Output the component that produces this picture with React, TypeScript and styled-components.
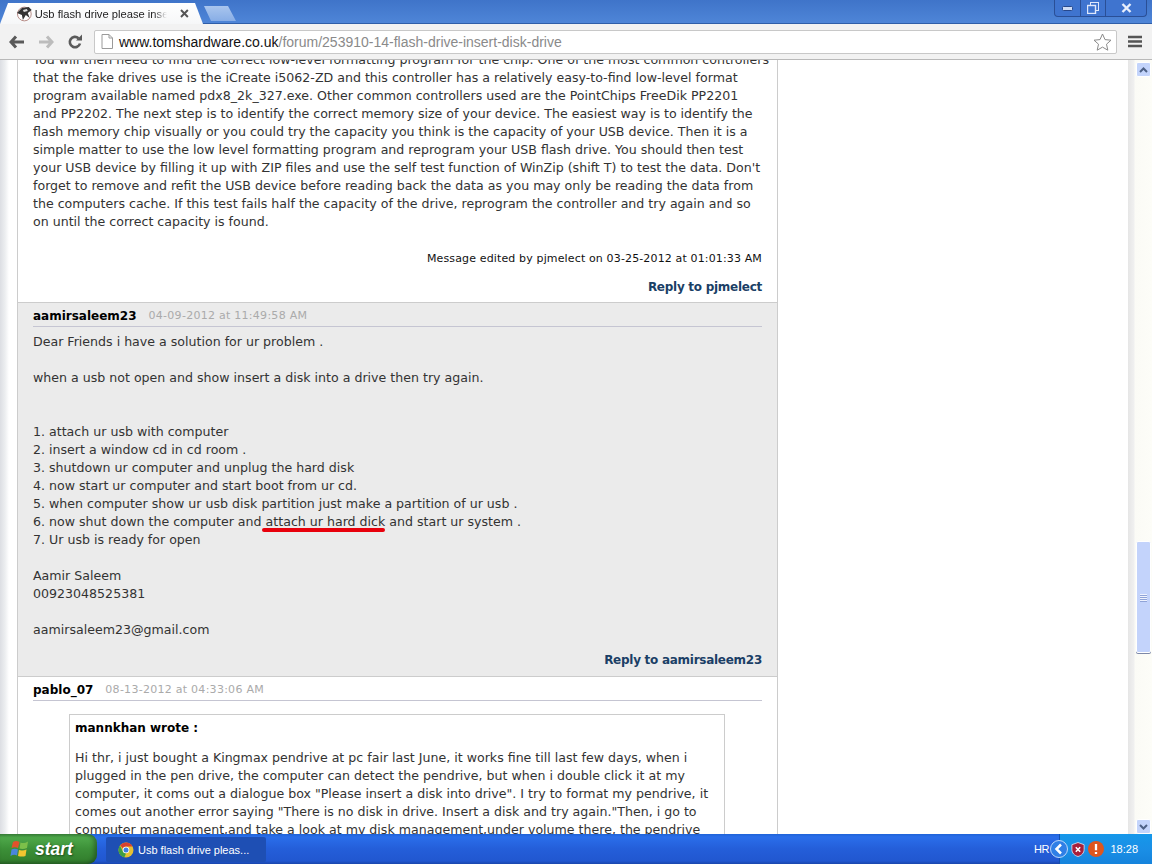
import React from 'react'
import styled, { createGlobalStyle } from 'styled-components'

const GlobalStyle = createGlobalStyle`
  html, body {
    margin: 0;
    padding: 0;
    overflow: hidden;
    background: #fff;
  }
`

const Screen = styled.div`
  width: 1152px;
  height: 864px;
  display: flex;
  flex-direction: column;
  overflow: hidden;
  font-family: 'DejaVu Sans', Verdana, sans-serif;
`

const TabStrip = styled.div`
  height: 24px;
  flex: none;
  display: flex;
  align-items: flex-end;
  justify-content: space-between;
  background: linear-gradient(#3f74c9, #4f86d8);
  box-shadow: inset 0 -1px 0 #2f5ea8;
`

const Tabs = styled.div`
  display: flex;
  align-items: flex-end;
`

const Tab = styled.div`
  width: 203px;
  height: 21px;
  box-sizing: border-box;
  padding: 0 14px 0 16px;
  display: flex;
  align-items: center;
  gap: 2px;
  background: linear-gradient(#fff, #f6f7f8);
  clip-path: polygon(0 100%, 8px 0, 195px 0, 100% 100%);
`

const TabTitle = styled.span`
  width: 135px;
  margin-right: 11px;
  overflow: hidden;
  white-space: nowrap;
  font: 11.2px 'Liberation Sans', Arial, sans-serif;
  color: #222;
  -webkit-mask-image: linear-gradient(90deg, #000 90%, transparent);
  mask-image: linear-gradient(90deg, #000 90%, transparent);
`

const NewTab = styled.div`
  width: 32px;
  height: 15px;
  margin: 0 0 3px 1px;
  background: linear-gradient(#a9c5ee, #88aee6);
  clip-path: polygon(0 0, 24px 0, 100% 100%, 7px 100%);
`

const WindowButtons = styled.div`
  display: flex;
  align-self: flex-start;
  margin-right: 5px;
  height: 16px;
  border: 1px solid #2a4f96;
  border-top: 0;
  border-radius: 0 0 4px 4px;
  background: #3f74cf;
`

const WindowButton = styled.div<{ $w: number }>`
  width: ${(p) => p.$w}px;
  box-sizing: border-box;
  display: flex;
  align-items: center;
  justify-content: center;
  & + & {
    border-left: 1px solid #2a4f96;
  }
`

const Toolbar = styled.div`
  height: 36px;
  flex: none;
  box-sizing: border-box;
  display: flex;
  align-items: center;
  padding: 0 10px 0 9px;
  background: #f2f2f2;
  border-bottom: 1px solid #b9b9b9;
`

const NavButton = styled.div<{ $w: number }>`
  width: ${(p) => p.$w}px;
  display: flex;
  align-items: center;
  justify-content: flex-start;
`

const Omnibox = styled.div`
  flex: 1;
  height: 24px;
  margin-right: 11px;
  box-sizing: border-box;
  display: flex;
  align-items: center;
  padding: 0 4px 0 6px;
  gap: 6px;
  background: #fff;
  border: 1px solid #c8c8c8;
  border-radius: 2px;
`

const Url = styled.div`
  flex: 1;
  font: 14px 'Liberation Sans', Arial, sans-serif;
  color: #8a8a8a;
  white-space: nowrap;
  b {
    font-weight: normal;
    color: #111;
  }
`

const Viewport = styled.div`
  flex: 1;
  min-height: 0;
  display: flex;
  background: #fff;
  overflow: hidden;
`

const Gutter = styled.div`
  width: 17px;
  flex: none;
  background: linear-gradient(90deg, #dcdee3 0, #eceef0 5px, #fff 9px);
`

const Forum = styled.div`
  width: 761px;
  flex: none;
  box-sizing: border-box;
  border-left: 1px solid #ccc;
  border-right: 1px solid #ccc;
  margin-top: -9px;
  font-size: 12.6px;
  line-height: 18px;
  color: #333;
`

const Spacer = styled.div`
  flex: 1;
`

const Post = styled.section<{ $alt?: boolean }>`
  box-sizing: border-box;
  padding: 0 15px 0 15px;
  background: ${(p) => (p.$alt ? '#ebebeb' : '#fff')};
  & + & {
    border-top: 1px solid #ccc;
  }
`

const Line = styled.div`
  height: 18px;
  white-space: nowrap;
`

const Edited = styled.div`
  margin-top: 19px;
  text-align: right;
  font-size: 11px;
  color: #111;
  letter-spacing: 0.14px;
`

const Actions = styled.div<{ $gap: number; $end: number }>`
  margin-top: ${(p) => p.$gap}px;
  padding-bottom: ${(p) => p.$end}px;
  text-align: right;
  font-size: 12px;
  font-weight: bold;
  color: #1b3f66;
  letter-spacing: -0.27px;
`

const PostHead = styled.header`
  height: 24px;
  box-sizing: border-box;
  padding-top: 2px;
  display: flex;
  align-items: center;
  gap: 12px;
  border-bottom: 1px solid #c5c5d2;
  margin-bottom: 6px;
`

const Author = styled.span`
  font-size: 12px;
  font-weight: bold;
  color: #000;
`

const Stamp = styled.span`
  font-size: 11px;
  color: #aaa;
  letter-spacing: 0.27px;
`

const Marked = styled.span`
  position: relative;
  &::after {
    content: '';
    position: absolute;
    left: -4px;
    right: 0;
    bottom: -3px;
    height: 4px;
    border-radius: 2px;
    background: #e8000c;
  }
`

const Quote = styled.blockquote`
  margin: 13px 0 0 36px;
  width: 656px;
  box-sizing: border-box;
  padding: 4px 5px 0;
  border: 1px solid #ccc;
  background: #fff;
`

const QuoteHead = styled.div`
  height: 18px;
  margin-bottom: 12px;
  font-weight: bold;
  font-size: 12px;
  color: #000;
`

const Scrollbar = styled.div`
  width: 24px;
  flex: none;
  display: flex;
  flex-direction: column;
  align-items: flex-end;
  box-sizing: border-box;
  padding-right: 1px;
  background: linear-gradient(90deg, #e6e6e6 0, #f0f0f0 6px, #fbfbf6 7px, #fdfdf8 100%);
`

const ScrollArrow = styled.div`
  width: 15px;
  height: 15px;
  margin-top: 2px;
  display: flex;
  align-items: center;
  justify-content: center;
  border: 1px solid #fff;
  border-radius: 2px;
  box-sizing: border-box;
  background: #c3d4fb;
`

const Track = styled.div`
  flex: 1;
  width: 15px;
  position: relative;
`

const Thumb = styled.div`
  position: absolute;
  top: 464px;
  left: 0;
  width: 15px;
  height: 112px;
  box-sizing: border-box;
  display: flex;
  flex-direction: column;
  align-items: center;
  justify-content: center;
  gap: 1px;
  background: #c3d3fb;
  border: 1px solid #fff;
  border-radius: 2px;
  box-shadow: 0 1px 0 #7d88a8;
  i {
    width: 7px;
    height: 1px;
    background: #eef2fe;
    box-shadow: 0 1px 0 #8fa3d8;
  }
`

const Taskbar = styled.div`
  height: 30px;
  flex: none;
  display: flex;
  align-items: stretch;
  background: linear-gradient(#1f63d8 0, #2a6eea 3px, #245ed9 50%, #2157d0 90%, #1a46ac 100%);
  color: #fff;
`

const StartButton = styled.div`
  width: 97px;
  flex: none;
  box-sizing: border-box;
  padding-left: 10px;
  display: flex;
  align-items: center;
  gap: 5px;
  background: linear-gradient(#3f8f3f 0, #4ea84a 12%, #3c9038 50%, #34812f 85%, #2a6b28 100%);
  border-radius: 0 9px 9px 0;
  box-shadow: inset -3px 0 4px rgba(0, 0, 0, 0.3);
  font: italic bold 17.5px 'Liberation Sans', Arial, sans-serif;
  text-shadow: 1px 1px 2px #1d4d1c;
`

const TaskButton = styled.div`
  width: 160px;
  margin: 3px 0 2px 9px;
  box-sizing: border-box;
  padding-left: 12px;
  display: flex;
  align-items: center;
  gap: 4px;
  background: #1e4fb4;
  border-radius: 2px;
  font: 11px 'Liberation Sans', Arial, sans-serif;
`

const Tray = styled.div`
  margin-left: auto;
  width: 93px;
  box-sizing: border-box;
  display: flex;
  align-items: center;
  gap: 3px;
  background: linear-gradient(#1598ea 0, #1a8fe6 50%, #1583dc 100%);
  border-left: 1px solid #0f4fb0;
  font: 11px 'Liberation Sans', Arial, sans-serif;
`

const TrayLabel = styled.span`
  margin-left: -26px;
  margin-right: -2px;
  letter-spacing: -0.5px;
`

const Clock = styled.span`
  margin-left: auto;
  margin-right: 14px;
`

const first = [
  'You will then need to find the correct low-level formatting program for the chip. One of the most common controllers',
  'that the fake drives use is the iCreate i5062-ZD and this controller has a relatively easy-to-find low-level format',
  'program available named pdx8_2k_327.exe. Other common controllers used are the PointChips FreeDik PP2201',
  'and PP2202. The next step is to identify the correct memory size of your device. The easiest way is to identify the',
  'flash memory chip visually or you could try the capacity you think is the capacity of your USB device. Then it is a',
  'simple matter to use the low level formatting program and reprogram your USB flash drive. You should then test',
  'your USB device by filling it up with ZIP files and use the self test function of WinZip (shift T) to test the data. Don\'t',
  'forget to remove and refit the USB device before reading back the data as you may only be reading the data from',
  'the computers cache. If this test fails half the capacity of the drive, reprogram the controller and try again and so',
  'on until the correct capacity is found.',
]

const quote = [
  'Hi thr, i just bought a Kingmax pendrive at pc fair last June, it works fine till last few days, when i',
  'plugged in the pen drive, the computer can detect the pendrive, but when i double click it at my',
  'computer, it coms out a dialogue box "Please insert a disk into drive". I try to format my pendrive, it',
  'comes out another error saying "There is no disk in drive. Insert a disk and try again."Then, i go to',
  'computer management,and take a look at my disk management,under volume there, the pendrive',
]

const Favicon = () => (
  <svg width="17" height="17" viewBox="0 0 17 17">
    <circle cx="8.5" cy="9" r="7" fill="#fff" stroke="#b58a84" strokeWidth="1" />
    <path d="M1 8 L6 3 L13 2 L16 5 L12 8 L14 13 L10 10 L7 15 L6 10 Z" fill="#333" />
    <path d="M7 5L11 4L12 6L8 7Z" fill="#ddd" />
  </svg>
)

const ChromeLogo = () => (
  <svg width="16" height="16" viewBox="0 0 16 16">
    <circle cx="8" cy="8" r="7.5" fill="#e6c132" />
    <path d="M8 .5A7.5 7.5 0 0 1 14.6 4.5H8A3.5 3.5 0 0 0 4.8 6.5L2.2 3.2A7.5 7.5 0 0 1 8 .5Z" fill="#d8412f" />
    <path d="M1.9 3.6L5 9.5A3.5 3.5 0 0 0 8 11.5L6.4 15.3A7.5 7.5 0 0 1 1.9 3.6Z" fill="#3f9e45" />
    <circle cx="8" cy="8" r="3.3" fill="#fff" />
    <circle cx="8" cy="8" r="2.5" fill="#3f7fe0" />
  </svg>
)

const Flag = () => (
  <svg width="20" height="20" viewBox="0 0 20 20">
    <path d="M3 3Q6 1 9.5 3L8 9Q5 7.5 1.5 9Z" fill="#e0522c" />
    <path d="M10.5 3.5Q14 5 18 2.5L17 9Q13 10.5 9.5 9.5Z" fill="#7cc04a" />
    <path d="M1.5 10.5Q4.5 9 8 10.5L7 16.5Q4 15 .5 17Z" fill="#4a86dc" />
    <path d="M9 11Q12.5 12 16.5 10.5L15.5 17Q12 18 8 17Z" fill="#f2c530" />
  </svg>
)

export default function App() {
  return (
    <Screen>
      <GlobalStyle />
      <TabStrip>
        <Tabs>
          <Tab>
            <Favicon />
            <TabTitle>Usb flash drive please insert disk</TabTitle>
            <svg width="9" height="9" viewBox="0 0 9 9">
              <path d="M1 1L8 8M8 1L1 8" stroke="#555" strokeWidth="2" />
            </svg>
          </Tab>
          <NewTab />
        </Tabs>
        <WindowButtons>
          <WindowButton $w={25}>
            <svg width="11" height="5" viewBox="0 0 11 5">
              <rect x="0.5" y="0.5" width="10" height="4" rx="1" fill="#cfdcf5" stroke="#27488c" />
            </svg>
          </WindowButton>
          <WindowButton $w={25}>
            <svg width="12" height="12" viewBox="0 0 12 12">
              <rect x="3.5" y="0.5" width="8" height="8" fill="none" stroke="#dfe8fb" />
              <rect x="0.5" y="3.5" width="8" height="8" fill="#3f74cf" stroke="#dfe8fb" strokeWidth="1.4" />
            </svg>
          </WindowButton>
          <WindowButton $w={41}>
            <svg width="11" height="10" viewBox="0 0 11 10">
              <path d="M1.5 1L9.5 9M9.5 1L1.5 9" stroke="#e8effc" strokeWidth="2.4" />
            </svg>
          </WindowButton>
        </WindowButtons>
      </TabStrip>
      <Toolbar>
        <NavButton $w={29}>
          <svg width="16" height="14" viewBox="0 0 16 14">
            <path d="M7 1.5L2 7l5 5.5M2.5 7H15" fill="none" stroke="#5a5a5a" strokeWidth="3" />
          </svg>
        </NavButton>
        <NavButton $w={29}>
          <svg width="16" height="14" viewBox="0 0 16 14">
            <path d="M9 1.5L14 7l-5 5.5M13.5 7H1" fill="none" stroke="#bcbcbc" strokeWidth="3" />
          </svg>
        </NavButton>
        <NavButton $w={27}>
          <svg width="16" height="16" viewBox="0 0 16 16">
            <path d="M13 9.5A5.2 5.2 0 1 1 11.5 4.2" fill="none" stroke="#5a5a5a" strokeWidth="2.6" />
            <path d="M9 6.5H15V.5Z" fill="#5a5a5a" />
          </svg>
        </NavButton>
        <Omnibox>
          <svg width="12" height="15" viewBox="0 0 12 15">
            <path d="M1 .5H8L11.5 4V14.5H1Z M8 .5V4H11.5" fill="#fff" stroke="#9a9a9a" />
          </svg>
          <Url>
            <b>www.tomshardware.co.uk</b>/forum/253910-14-flash-drive-insert-disk-drive
          </Url>
          <svg width="19" height="18" viewBox="0 0 19 18">
            <path d="M9.5 1l2.5 5.6 6 .6-4.5 4 1.3 6-5.3-3.1-5.3 3.1 1.3-6-4.5-4 6-.6Z" fill="#fff" stroke="#8a8a8a" />
          </svg>
        </Omnibox>
        <svg width="14" height="13" viewBox="0 0 14 13">
          <path d="M0 2H14M0 6.5H14M0 11H14" stroke="#555" strokeWidth="2.6" />
        </svg>
      </Toolbar>
      <Viewport>
        <Gutter />
        <Forum>
          <Post>
            {first.map((l) => (
              <Line key={l}>{l}</Line>
            ))}
            <Edited>Message edited by pjmelect on 03-25-2012 at 01:01:33 AM</Edited>
            <Actions $gap={10} $end={6}>Reply to pjmelect</Actions>
          </Post>
          <Post $alt>
            <PostHead>
              <Author>aamirsaleem23</Author>
              <Stamp>04-09-2012 at 11:49:58 AM</Stamp>
            </PostHead>
            <Line>Dear Friends i have a solution for ur problem .</Line>
            <Line />
            <Line>when a usb not open and show insert a disk into a drive then try again.</Line>
            <Line />
            <Line />
            <Line>1. attach ur usb with computer</Line>
            <Line>2. insert a window cd in cd room .</Line>
            <Line>3. shutdown ur computer and unplug the hard disk</Line>
            <Line>4. now start ur computer and start boot from ur cd.</Line>
            <Line>5. when computer show ur usb disk partition just make a partition of ur usb .</Line>
            <Line>
              6. now shut down the computer and <Marked>attach ur hard dick</Marked> and start ur system .
            </Line>
            <Line>7. Ur usb is ready for open</Line>
            <Line />
            <Line>Aamir Saleem</Line>
            <Line>00923048525381</Line>
            <Line />
            <Line>aamirsaleem23@gmail.com</Line>
            <Actions $gap={12} $end={7}>Reply to aamirsaleem23</Actions>
          </Post>
          <Post>
            <PostHead>
              <Author>pablo_07</Author>
              <Stamp>08-13-2012 at 04:33:06 AM</Stamp>
            </PostHead>
            <Quote>
              <QuoteHead>mannkhan wrote :</QuoteHead>
              {quote.map((l) => (
                <Line key={l}>{l}</Line>
              ))}
            </Quote>
          </Post>
        </Forum>
        <Spacer />
        <Scrollbar>
          <ScrollArrow>
            <svg width="9" height="6" viewBox="0 0 9 6">
              <path d="M1 5L4.5 1.5L8 5" fill="none" stroke="#4d6185" strokeWidth="2" />
            </svg>
          </ScrollArrow>
          <Track>
            <Thumb>
              <i />
              <i />
              <i />
              <i />
            </Thumb>
          </Track>
          <ScrollArrow>
            <svg width="9" height="6" viewBox="0 0 9 6">
              <path d="M1 1L4.5 4.5L8 1" fill="none" stroke="#4d6185" strokeWidth="2" />
            </svg>
          </ScrollArrow>
        </Scrollbar>
      </Viewport>
      <Taskbar>
        <StartButton>
          <Flag />
          start
        </StartButton>
        <TaskButton>
          <ChromeLogo />
          Usb flash drive pleas...
        </TaskButton>
        <Tray>
          <TrayLabel>HR</TrayLabel>
          <svg width="18" height="18" viewBox="0 0 18 18">
            <circle cx="9" cy="9" r="8.5" fill="#2f7fe6" stroke="#bcd8fa" />
            <path d="M11 4.5L6.5 9L11 13.5" fill="none" stroke="#fff" strokeWidth="2.5" />
          </svg>
          <svg width="14" height="17" viewBox="0 0 16 18">
            <path d="M8 1L15 3.5V9C15 13 12 16 8 17C4 16 1 13 1 9V3.5Z" fill="#a81f3a" stroke="#d6dcec" />
            <path d="M5.5 6.5L10.5 11.5M10.5 6.5L5.5 11.5" stroke="#fff" strokeWidth="1.8" />
          </svg>
          <svg width="16" height="16" viewBox="0 0 18 18">
            <circle cx="9" cy="9" r="9" fill="#e0561e" />
            <path d="M9 3.5V10.5M9 12.5V14.5" stroke="#fff" strokeWidth="2.6" />
          </svg>
          <Clock>18:28</Clock>
        </Tray>
      </Taskbar>
    </Screen>
  )
}
